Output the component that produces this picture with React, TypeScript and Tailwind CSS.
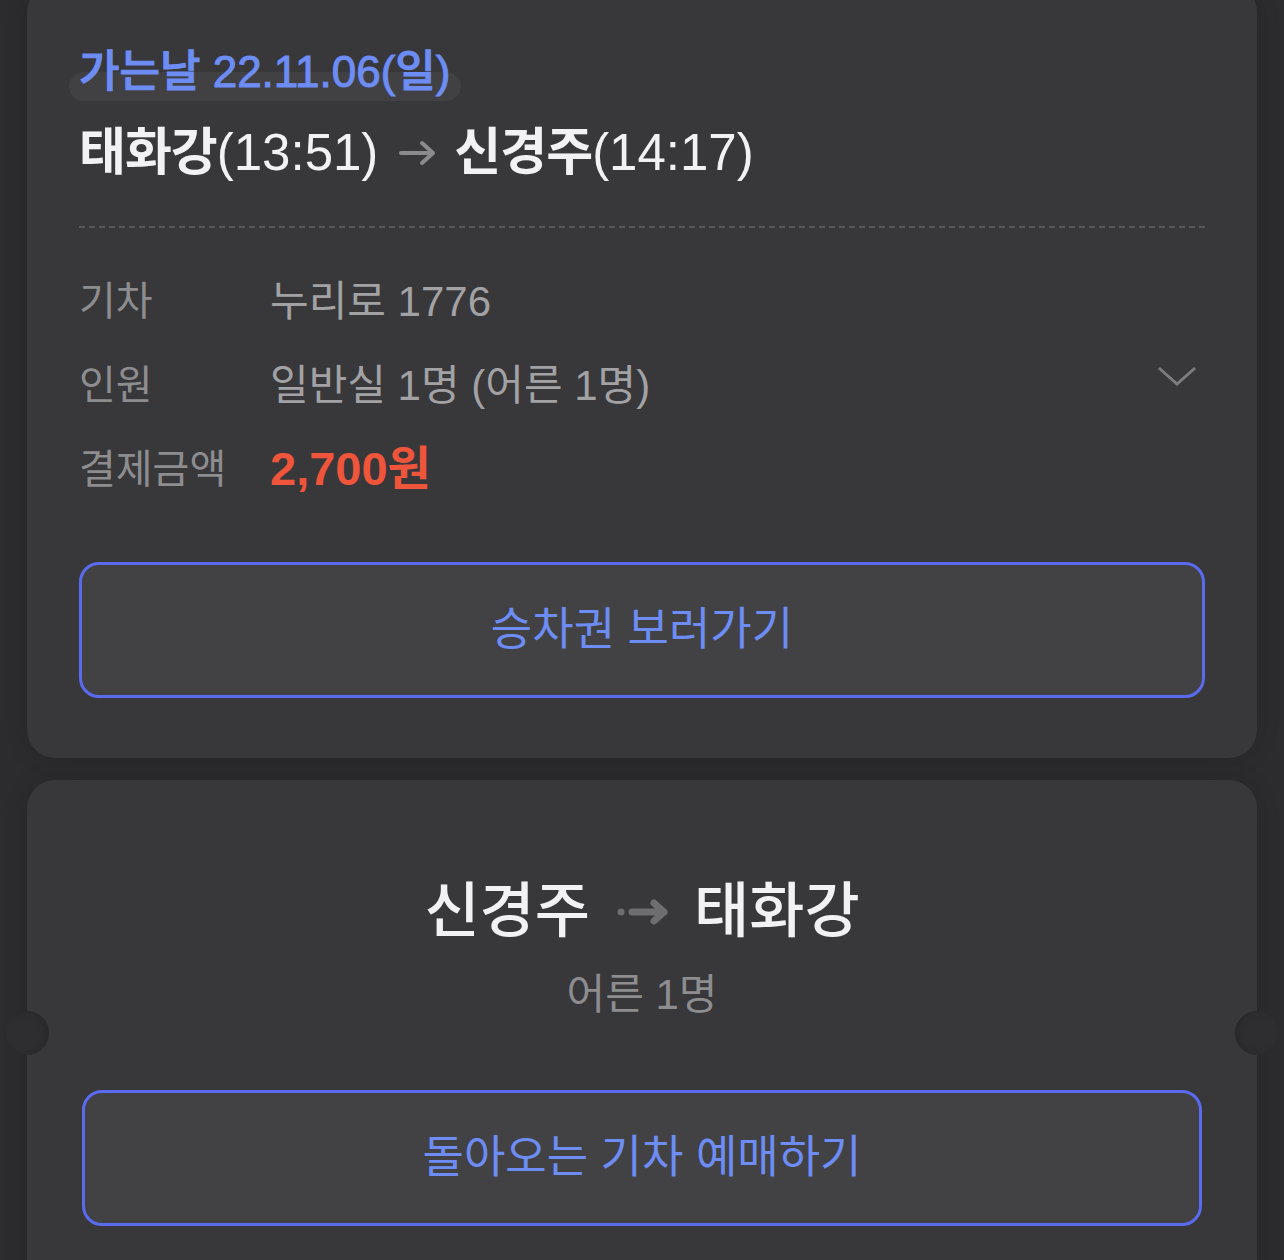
import React from 'react';

const font = { fontFamily: '"Liberation Sans", "Noto Sans CJK KR", "Noto Sans", sans-serif' };

const Row = ({ label, children, right }: { label: string; children: React.ReactNode; right?: React.ReactNode }) => (
  <div className="flex items-center h-[84px]">
    <span className="w-[191px] shrink-0 text-[40px] text-[#8d8d90]">{label}</span>
    <div className="flex-1">{children}</div>
    {right}
  </div>
);

const App: React.FC = () => {
  return (
    <div className="min-h-[1260px] h-[1260px] overflow-hidden bg-[#2c2c2e] px-[27px]" style={font}>
      {/* first ticket */}
      <div className="-mt-[16px] rounded-[28px] bg-[#38383a] px-[52px] pt-[62px] pb-[60px] shadow-[0_0_24px_rgba(0,0,0,0.12)]">
        <div className="h-[52px] leading-[52px]">
          <span className="relative inline-block">
            <span className="absolute -left-[10px] -right-[11px] top-[26px] h-[29px] rounded-full bg-[#414144]"></span>
            <span className="relative text-[44px] font-medium text-[#6d8df4] [-webkit-text-stroke:1px_#6d8df4]">가는날 22.11.06(일)</span>
          </span>
        </div>
        <div className="mt-[25px] flex items-center h-[60px] leading-[60px] text-[51px] text-[#f2f2f4]">
          <span className="font-bold tracking-[-1px]">태화강</span>
          <span>(13:51)</span>
          <svg width="40" height="30" viewBox="0 0 40 30" className="ml-[20px] mr-[16px]">
            <path d="M3 15 H35 M24 5 L35 15 L24 25" fill="none" stroke="#8b8b8e" strokeWidth="4" strokeLinecap="round" strokeLinejoin="round" />
          </svg>
          <span className="font-bold tracking-[-1px]">신경주</span>
          <span>(14:17)</span>
        </div>
        <div className="mt-[43px] border-t-2 border-dashed border-[#58585b]"></div>
        <div className="mt-[31px] -mb-[3px]">
          <Row label="기차">
            <span className="text-[42px] text-[#a2a2a5]">누리로 1776</span>
          </Row>
          <Row
            label="인원"
            right={
              <svg width="40" height="22" viewBox="0 0 40 22" className="mr-[8px] -mt-[18px]">
                <path d="M2 3 L20 19 L38 3" fill="none" stroke="#7d7d80" strokeWidth="3" />
              </svg>
            }
          >
            <span className="text-[42px] text-[#a2a2a5]">일반실 1명 (어른 1명)</span>
          </Row>
          <Row label="결제금액">
            <span className="text-[47px] font-bold text-[#ef553b]">2,700원</span>
          </Row>
        </div>
        <button className="mt-[54px] flex h-[136px] w-full items-center justify-center rounded-[20px] border-[3px] border-[#5b6bf0] bg-[#424244] text-[45px] text-[#6d8df4]">
          승차권 보러가기
        </button>
      </div>

      {/* return ticket */}
      <div className="relative mt-[22px] h-[520px] rounded-[28px] bg-[#38383a] px-[55px] pt-[97px] shadow-[0_0_24px_rgba(0,0,0,0.12)]">
        <span className="absolute -left-[22px] top-[231px] h-[44px] w-[44px] rounded-full bg-[#2e2e30] shadow-[inset_-3px_0_6px_rgba(0,0,0,0.15)]"></span>
        <span className="absolute -right-[22px] top-[231px] h-[44px] w-[44px] rounded-full bg-[#2e2e30] shadow-[inset_3px_0_6px_rgba(0,0,0,0.15)]"></span>
        <div className="flex h-[70px] items-center justify-center text-[60px] font-medium leading-[70px] text-[#f2f2f4]">
          <span>신경주</span>
          <svg width="56" height="30" viewBox="0 0 56 30" className="mx-[24px]">
            <circle cx="7" cy="15" r="3.5" fill="#6e6e71" />
            <path d="M18 15 H50 M40 6 L50 15 L40 24" fill="none" stroke="#6e6e71" strokeWidth="7" strokeLinecap="round" strokeLinejoin="round" />
          </svg>
          <span>태화강</span>
        </div>
        <div className="mt-[23px] h-[50px] text-center text-[42px] leading-[50px] text-[#8d8d90]">어른 1명</div>
        <button className="mt-[70px] flex h-[136px] w-full items-center justify-center rounded-[20px] border-[3px] border-[#5b6bf0] bg-[#424244] text-[45px] text-[#6d8df4]">
          돌아오는 기차 예매하기
        </button>
      </div>
    </div>
  );
};

export default App;
